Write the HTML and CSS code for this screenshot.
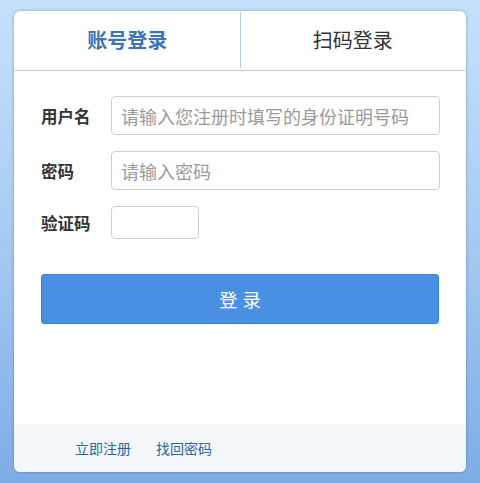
FILE: index.html
```html
<!DOCTYPE html>
<html lang="zh">
<head>
<meta charset="utf-8">
<title>登录</title>
<link rel="stylesheet" href="styles.css">
</head>
<body>
<div class="card">
  <div class="tabs">
    <div class="tab active">账号登录</div>
    <div class="tab">扫码登录</div>
  </div>
  <form class="form">
    <div class="row">
      <label class="label">用户名</label>
      <input class="input" type="text" placeholder="请输入您注册时填写的身份证明号码">
    </div>
    <div class="row">
      <label class="label">密码</label>
      <input class="input" type="password" placeholder="请输入密码">
    </div>
    <div class="row">
      <label class="label">验证码</label>
      <input class="input captcha" type="text">
    </div>
    <button class="btn" type="button">登录</button>
  </form>
  <div class="footer">
    <a class="link" href="#">立即注册</a>
    <a class="link" href="#">找回密码</a>
  </div>
</div>
</body>
</html>
```
FILE: styles.css
```css
html, body {
  margin: 0;
  height: 100%;
}
body {
  background: linear-gradient(to bottom, #c7e1fb 0%, #a9cdf3 45%, #7eace5 100%);
  font-family: "Noto Sans CJK SC", "Microsoft YaHei", sans-serif;
  padding: 11px 14px;
  box-sizing: border-box;
}
.card {
  background: #fff;
  border-radius: 6px;
  box-shadow: 0 0 3px rgba(40, 60, 90, 0.45);
  height: 461px;
  display: flex;
  flex-direction: column;
  overflow: hidden;
}
.tabs {
  display: flex;
  height: 59px;
  border-bottom: 1px solid #b8cce6;
  margin: 0 1px;
}
.tab {
  flex: 1;
  display: flex;
  align-items: center;
  justify-content: center;
  font-size: 20px;
  color: #333;
  padding-top: 1px;
  padding-bottom: 3px;
}
.tab.active {
  font-weight: bold;
  color: #3e72b9;
  border-right: 1px solid #b8cce6;
  margin-top: 1px;
  margin-bottom: 2px;
}
.form {
  display: flex;
  flex-direction: column;
  padding: 25px 26px 0 27px;
  flex: 1;
}
.row {
  display: flex;
  align-items: center;
  margin-bottom: 16px;
}
.label {
  width: 70px;
  flex-shrink: 0;
  font-size: 16.5px;
  font-weight: bold;
  color: #333;
}
.input {
  flex: 1;
  height: 39px;
  box-sizing: border-box;
  border: 1px solid #cfcfcf;
  border-radius: 4px;
  padding: 0 9px;
  font-family: inherit;
  font-size: 18px;
  color: #333;
  outline: none;
  min-width: 0;
}
.input::placeholder {
  color: #9a9a9a;
}
.input.captcha {
  flex: none;
  width: 88px;
  height: 33px;
}
.btn {
  margin-top: 19px;
  width: 398px;
  height: 50px;
  background: #4a90e2;
  border: 1px solid #3b80e2;
  border-radius: 3px;
  color: #fff;
  font-family: inherit;
  font-size: 18.5px;
  letter-spacing: 5px;
  text-indent: 5px;
  cursor: pointer;
}
.footer {
  height: 48px;
  background: #f3f7f9;
  display: flex;
  align-items: center;
  padding-left: 61px;
  gap: 25px;
}
.link {
  font-size: 14px;
  color: #2c64a8;
  text-decoration: none;
}
```
